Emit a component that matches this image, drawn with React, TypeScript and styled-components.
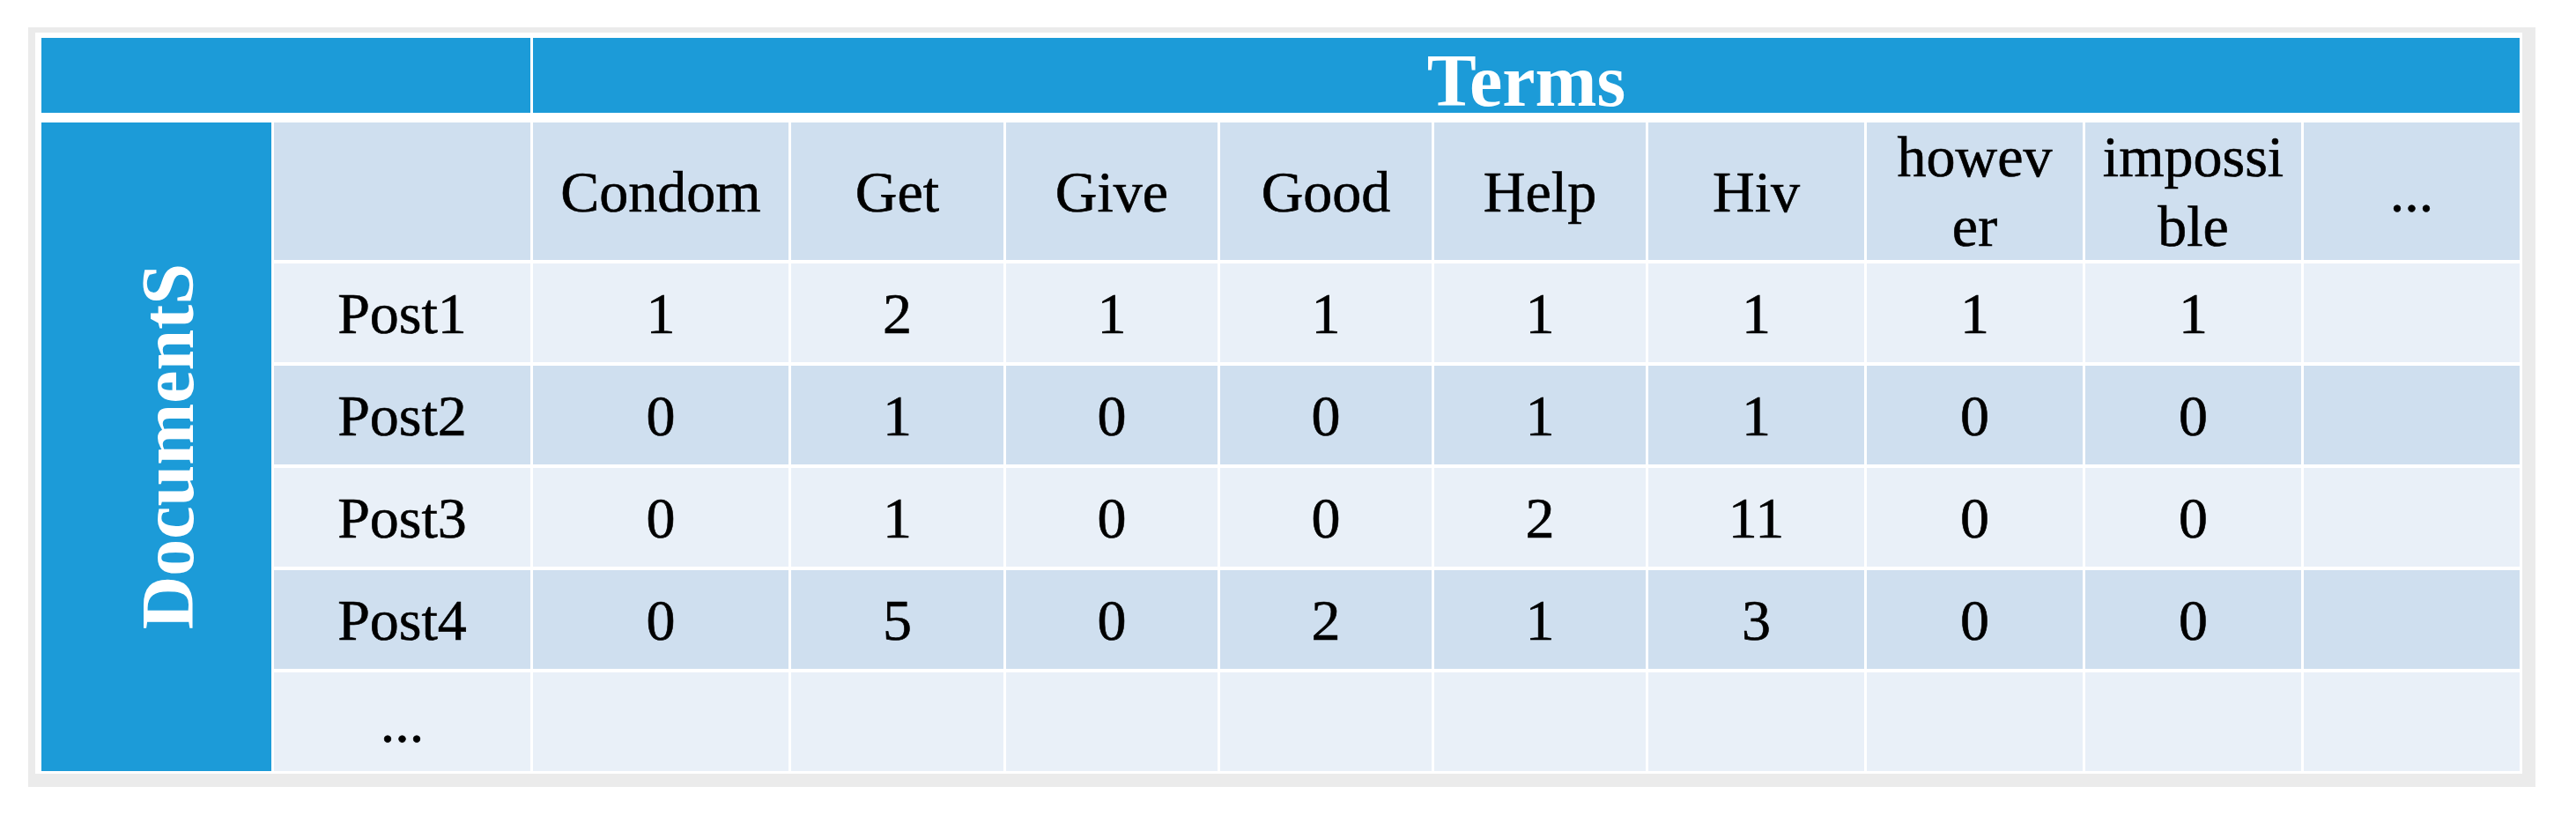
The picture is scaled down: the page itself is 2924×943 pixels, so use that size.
import React from "react";
import styled, { createGlobalStyle } from "styled-components";

// Page reset and base font
const GlobalStyle = createGlobalStyle`
  html, body {
    margin: 0;
    padding: 0;
    background: #ffffff;
  }
  body {
    font-family: "Liberation Serif", "Times New Roman", serif;
  }
`;

const Page = styled.div`
  padding: 31px 0 0 32px;
`;

// grey drop-shadow looking frame around the slide table
const Frame = styled.div`
  display: inline-block;
  background: #ebebeb;
  padding: 6px 15px 15px 8px;
`;

const Sheet = styled.div`
  background: #ffffff;
  padding: 6px 3px 3px 7px;
`;

const Matrix = styled.div`
  display: grid;
  grid-template-columns: 261px 291px 290px 241px 240px 240px 240px 245px 245px 245px 245px;
  grid-template-rows: 92px 156px repeat(5, 112px);
  column-gap: 3px;
  row-gap: 4px;
`;

const BandCell = styled.div<{ $cols: string }>`
  grid-row: 1;
  grid-column: ${(p) => p.$cols};
  margin-bottom: 7px;
  background: #1c9bd8;
  display: flex;
  align-items: center;
  justify-content: center;
  padding-top: 12px;
  box-sizing: border-box;
`;

const BandTitle = styled.span`
  color: #ffffff;
  font-weight: 700;
  font-size: 84px;
  line-height: 1;
`;

const SideBar = styled.div`
  grid-column: 1;
  grid-row: 2 / span 6;
  background: #1c9bd8;
  display: flex;
  align-items: center;
  justify-content: center;
  padding-left: 26px;
`;

const SideTitle = styled.span`
  writing-mode: vertical-rl;
  transform: rotate(180deg);
  color: #ffffff;
  font-weight: 700;
  font-size: 84px;
  line-height: 1;
`;

type Tone = "header" | "light" | "dark";

const toneColors: Record<Tone, string> = {
  header: "#cfdfef",
  light: "#e9f0f8",
  dark: "#cfdfef",
};

const Cell = styled.div<{ $tone: Tone }>`
  background: ${(p) => toneColors[p.$tone]};
  display: flex;
  align-items: center;
  justify-content: center;
  text-align: center;
  color: #000000;
  -webkit-text-stroke: 0.6px #000000;
  font-size: 66px;
  line-height: 79px;
`;

const terms: React.ReactNode[] = [
  "Condom",
  "Get",
  "Give",
  "Good",
  "Help",
  "Hiv",
  <>
    howev
    <br />
    er
  </>,
  <>
    impossi
    <br />
    ble
  </>,
  "...",
];

interface DocRow {
  label: string;
  counts: (number | "")[];
}

const rows: DocRow[] = [
  { label: "Post1", counts: [1, 2, 1, 1, 1, 1, 1, 1, ""] },
  { label: "Post2", counts: [0, 1, 0, 0, 1, 1, 0, 0, ""] },
  { label: "Post3", counts: [0, 1, 0, 0, 2, 11, 0, 0, ""] },
  { label: "Post4", counts: [0, 5, 0, 2, 1, 3, 0, 0, ""] },
  { label: "...", counts: ["", "", "", "", "", "", "", "", ""] },
];

const App: React.FC = () => {
  return (
    <>
      <GlobalStyle />
      <Page>
        <Frame>
          <Sheet>
            <Matrix>
              <BandCell $cols="1 / span 2" />
              <BandCell $cols="3 / span 9">
                <BandTitle>Terms</BandTitle>
              </BandCell>

              <SideBar>
                <SideTitle>DocumentS</SideTitle>
              </SideBar>

              {/* header row */}
              <Cell $tone="header" />
              {terms.map((term, i) => (
                <Cell key={i} $tone="header">
                  {term}
                </Cell>
              ))}

              {/* document rows */}
              {rows.map((row, r) => {
                const tone: Tone = r % 2 === 0 ? "light" : "dark";
                return (
                  <React.Fragment key={row.label + r}>
                    <Cell $tone={tone}>{row.label}</Cell>
                    {row.counts.map((count, c) => (
                      <Cell key={c} $tone={tone}>
                        {count}
                      </Cell>
                    ))}
                  </React.Fragment>
                );
              })}
            </Matrix>
          </Sheet>
        </Frame>
      </Page>
    </>
  );
};

export default App;
